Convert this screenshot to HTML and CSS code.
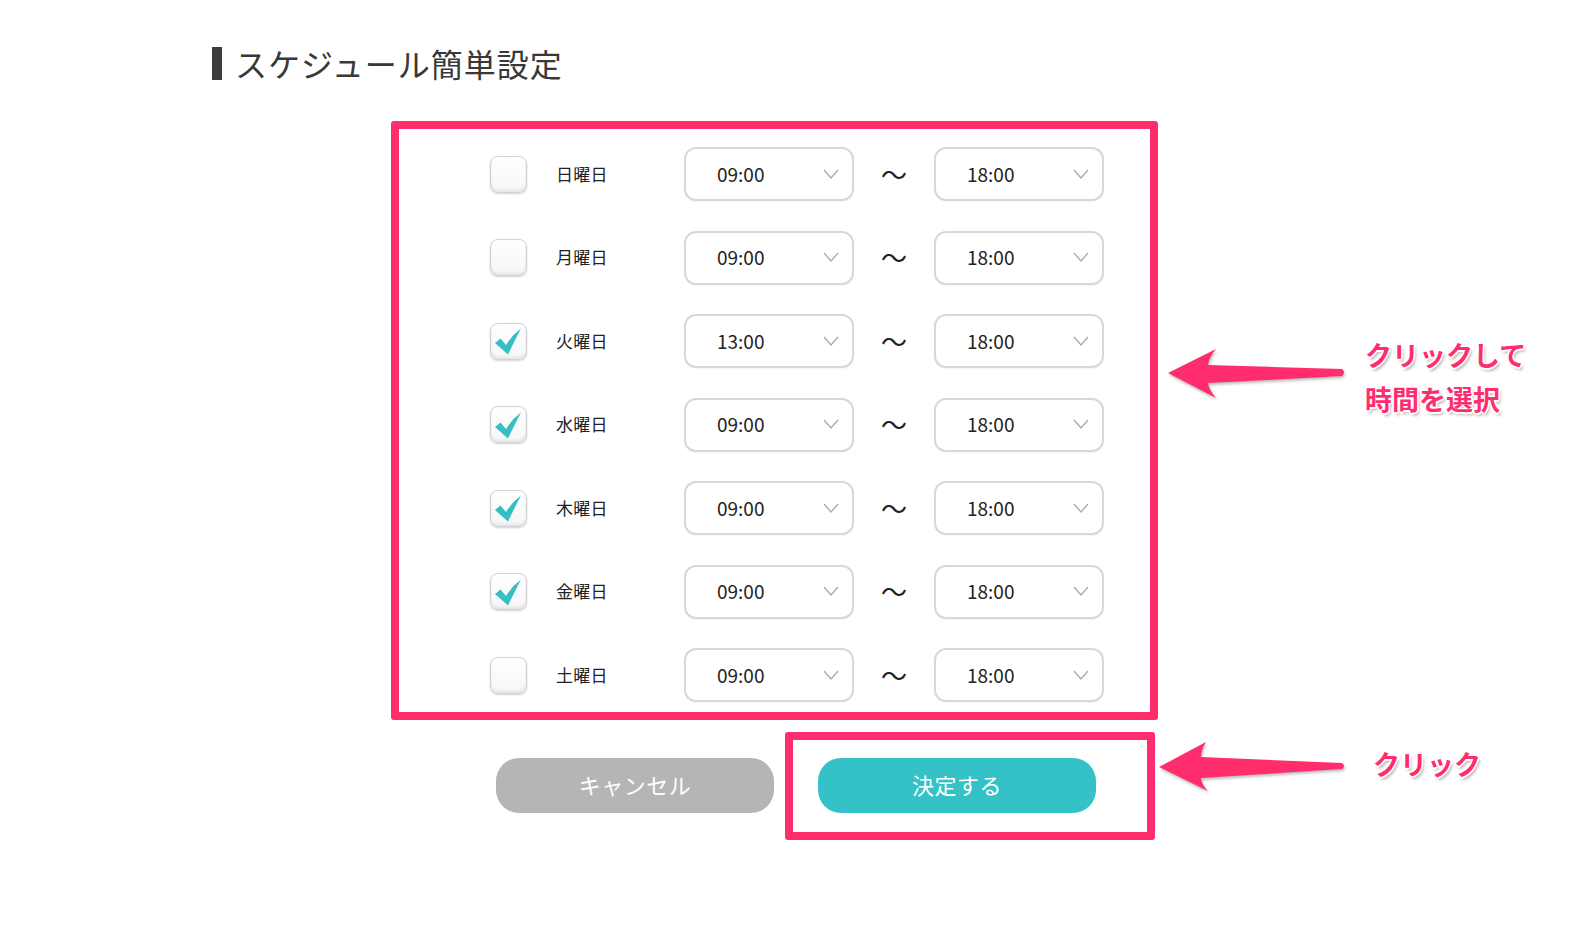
FILE: index.html
```html
<!DOCTYPE html>
<html lang="ja">
<head>
<meta charset="utf-8">
<title>スケジュール簡単設定</title>
<link rel="stylesheet" href="styles.css">
</head>
<body>
<div class="page">
  <h1 class="title"><span class="title-bar"></span><span class="title-text">スケジュール簡単設定</span></h1>

  <div class="panel">
    <div class="row">
      <span class="check"></span>
      <span class="day">日曜日</span>
      <div class="select"><span class="time">09:00</span><svg class="chev" viewBox="0 0 16 10"><path d="M1 1 L8 9 L15 1"/></svg></div>
      <span class="tilde">～</span>
      <div class="select"><span class="time">18:00</span><svg class="chev" viewBox="0 0 16 10"><path d="M1 1 L8 9 L15 1"/></svg></div>
    </div>
    <div class="row">
      <span class="check"></span>
      <span class="day">月曜日</span>
      <div class="select"><span class="time">09:00</span><svg class="chev" viewBox="0 0 16 10"><path d="M1 1 L8 9 L15 1"/></svg></div>
      <span class="tilde">～</span>
      <div class="select"><span class="time">18:00</span><svg class="chev" viewBox="0 0 16 10"><path d="M1 1 L8 9 L15 1"/></svg></div>
    </div>
    <div class="row">
      <span class="check"><svg class="tick" viewBox="0 0 37 37"><path d="M5 21 L10.5 16.5 L16 23 Q22 13 31 6.5 Q26 16 18 32.5 Z"/></svg></span>
      <span class="day">火曜日</span>
      <div class="select"><span class="time">13:00</span><svg class="chev" viewBox="0 0 16 10"><path d="M1 1 L8 9 L15 1"/></svg></div>
      <span class="tilde">～</span>
      <div class="select"><span class="time">18:00</span><svg class="chev" viewBox="0 0 16 10"><path d="M1 1 L8 9 L15 1"/></svg></div>
    </div>
    <div class="row">
      <span class="check"><svg class="tick" viewBox="0 0 37 37"><path d="M5 21 L10.5 16.5 L16 23 Q22 13 31 6.5 Q26 16 18 32.5 Z"/></svg></span>
      <span class="day">水曜日</span>
      <div class="select"><span class="time">09:00</span><svg class="chev" viewBox="0 0 16 10"><path d="M1 1 L8 9 L15 1"/></svg></div>
      <span class="tilde">～</span>
      <div class="select"><span class="time">18:00</span><svg class="chev" viewBox="0 0 16 10"><path d="M1 1 L8 9 L15 1"/></svg></div>
    </div>
    <div class="row">
      <span class="check"><svg class="tick" viewBox="0 0 37 37"><path d="M5 21 L10.5 16.5 L16 23 Q22 13 31 6.5 Q26 16 18 32.5 Z"/></svg></span>
      <span class="day">木曜日</span>
      <div class="select"><span class="time">09:00</span><svg class="chev" viewBox="0 0 16 10"><path d="M1 1 L8 9 L15 1"/></svg></div>
      <span class="tilde">～</span>
      <div class="select"><span class="time">18:00</span><svg class="chev" viewBox="0 0 16 10"><path d="M1 1 L8 9 L15 1"/></svg></div>
    </div>
    <div class="row">
      <span class="check"><svg class="tick" viewBox="0 0 37 37"><path d="M5 21 L10.5 16.5 L16 23 Q22 13 31 6.5 Q26 16 18 32.5 Z"/></svg></span>
      <span class="day">金曜日</span>
      <div class="select"><span class="time">09:00</span><svg class="chev" viewBox="0 0 16 10"><path d="M1 1 L8 9 L15 1"/></svg></div>
      <span class="tilde">～</span>
      <div class="select"><span class="time">18:00</span><svg class="chev" viewBox="0 0 16 10"><path d="M1 1 L8 9 L15 1"/></svg></div>
    </div>
    <div class="row">
      <span class="check"></span>
      <span class="day">土曜日</span>
      <div class="select"><span class="time">09:00</span><svg class="chev" viewBox="0 0 16 10"><path d="M1 1 L8 9 L15 1"/></svg></div>
      <span class="tilde">～</span>
      <div class="select"><span class="time">18:00</span><svg class="chev" viewBox="0 0 16 10"><path d="M1 1 L8 9 L15 1"/></svg></div>
    </div>
  </div>

  <div class="actions">
    <button class="btn btn-cancel">キャンセル</button>
    <div class="highlight">
      <button class="btn btn-ok">決定する</button>
    </div>
  </div>

  <svg class="arrow arrow-1" viewBox="1150 335 210 75">
    <path d="M1168 373 L1216 349 Q1209 357 1208 365 L1342 369 Q1346 372 1342 376 L1208 383 Q1209 390 1216 398 Z"/>
  </svg>
  <div class="note note-1">クリックして<br>時間を選択</div>

  <svg class="arrow arrow-2" viewBox="1150 730 210 75">
    <path d="M1159 767 L1206 742 Q1201 750 1201 757 L1342 763 Q1346 766 1342 769 L1201 778 Q1201 784 1208 791 Z"/>
  </svg>
  <div class="note note-2">クリック</div>
</div>
</body>
</html>
```

FILE: styles.css
```css
* { box-sizing: border-box; }

html, body {
  margin: 0;
  padding: 0;
  background: #ffffff;
}

body {
  font-family: "Noto Sans CJK JP", "Noto Sans", sans-serif;
  color: #333333;
}

.page {
  position: relative;
  width: 1587px;
  height: 930px;
  overflow: hidden;
}

.title {
  display: flex;
  align-items: center;
  gap: 13px;
  margin: 0;
  padding: 47px 0 0 212px;
  height: 80px;
  font-size: 32px;
  line-height: 33px;
  font-weight: 400;
  letter-spacing: 1px;
  color: #383838;
}

.title-bar {
  display: block;
  width: 10px;
  height: 33px;
  background: #3c3c3c;
}

.panel {
  margin: 41px 0 0 391px;
  width: 767px;
  height: 599px;
  border: 8px solid #ff2d6e;
  border-radius: 3px;
  padding: 18px 0 10px 91px;
  display: flex;
  flex-direction: column;
  gap: 29.5px;
}

.row {
  display: flex;
  align-items: center;
  height: 54px;
}

.check {
  position: relative;
  display: block;
  width: 37px;
  height: 37px;
  border-radius: 8px;
  border: 1.5px solid #d2d2d2;
  background: linear-gradient(#ffffff, #f6f6f6);
  box-shadow: inset 0 -2px 3px rgba(0, 0, 0, 0.08), inset 0 1px 1px rgba(255, 255, 255, 0.9), 0 1px 2px rgba(0, 0, 0, 0.18);
  flex: none;
}

.tick {
  display: block;
  position: absolute;
  left: -1.5px;
  top: -1.5px;
  width: 37px;
  height: 37px;
}

.tick path {
  fill: #35bfc4;
}

.day {
  display: block;
  width: 128px;
  margin-left: 29px;
  font-size: 17px;
  font-weight: 400;
  color: #222222;
  letter-spacing: 0.3px;
  padding-bottom: 2px;
}

.select {
  display: flex;
  align-items: center;
  justify-content: space-between;
  width: 170px;
  height: 54px;
  border: 2px solid #d8d8d8;
  border-radius: 12px;
  padding: 0 13px 0 31px;
  background: #ffffff;
  box-shadow: 0 1px 1px rgba(0, 0, 0, 0.04);
}

.time {
  font-size: 19px;
  color: #222222;
  padding-bottom: 2px;
}

.chev {
  width: 16px;
  height: 10px;
  margin-top: -1px;
}

.chev path {
  fill: none;
  stroke: #a9a9a9;
  stroke-width: 1.3;
}

.tilde {
  display: block;
  width: 80px;
  text-align: center;
  font-size: 26px;
  line-height: 1;
  color: #222222;
  padding-bottom: 1px;
}

.actions {
  display: flex;
  align-items: flex-start;
  margin: 12px 0 0 496px;
}

.btn {
  display: block;
  width: 278px;
  height: 55px;
  border: none;
  border-radius: 23px;
  font-family: "Noto Sans CJK JP", "Noto Sans", sans-serif;
  font-size: 22px;
  color: #ffffff;
  padding: 0 0 3px;
  letter-spacing: 0.5px;
}

.btn-cancel {
  margin-top: 26px;
  background: #b5b5b5;
}

.btn-ok {
  background: #35c2c6;
}

.highlight {
  margin-left: 11px;
  width: 370px;
  height: 108px;
  border: 8px solid #ff2d6e;
  border-radius: 3px;
  padding: 18px 0 0 25px;
}

.arrow {
  position: absolute;
  width: 210px;
  height: 75px;
  filter: drop-shadow(1px 2px 1.5px rgba(0, 0, 0, 0.28));
}

.arrow path {
  fill: #ff2d6e;
}

.arrow-1 {
  left: 1150px;
  top: 335px;
}

.arrow-2 {
  left: 1150px;
  top: 730px;
}

.note {
  position: absolute;
  font-size: 27px;
  font-weight: 700;
  line-height: 44px;
  color: #ff2d6e;
  letter-spacing: 0;
  text-shadow:
    -1.5px 0 0 #fff, 1.5px 0 0 #fff, 0 -1.5px 0 #fff, 0 1.5px 0 #fff,
    -1px -1px 0 #fff, 1px -1px 0 #fff, -1px 1px 0 #fff, 1px 1px 0 #fff,
    2px 3px 3px rgba(0, 0, 0, 0.3);
}

.note-1 {
  left: 1365px;
  top: 333px;
}

.note-2 {
  left: 1373px;
  top: 742px;
}
```
